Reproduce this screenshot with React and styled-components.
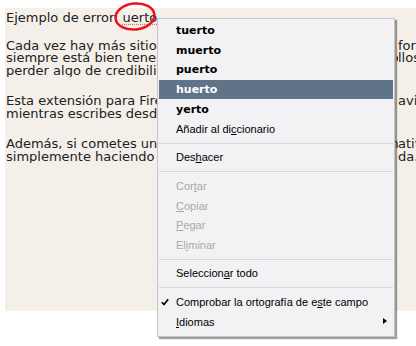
import React from "react";
import styled, { createGlobalStyle } from "styled-components";

const GlobalStyle = createGlobalStyle`
  html, body {
    margin: 0;
    padding: 0;
    background: #ffffff;
  }
`;

const Page = styled.div`
  position: relative;
  width: 416px;
  height: 346px;
  overflow: hidden;
  padding: 8px 0 0 5px;
  box-sizing: border-box;
`;

const Field = styled.div`
  height: 303px;
  background: #f4efe9;
  padding: 4px 0 0 1px;
  box-sizing: border-box;
  overflow: hidden;
  font-family: "DejaVu Sans", Verdana, sans-serif;
  font-size: 13px;
  line-height: 12.5px;
  color: #222;
`;

const Para = styled.div`
  margin-bottom: ${(p) => p.$gap}px;
`;

const Line = styled.div`
  display: grid;
  grid-template-columns: 392px max-content;
  white-space: nowrap;
`;

const Start = styled.span`
  overflow: hidden;
`;

const Misspelled = styled.span`
  text-decoration: underline dotted #e46a6a;
  text-underline-offset: 2px;
`;

const Circle = styled.svg`
  position: absolute;
  left: 108px;
  top: 0;
`;

const Menu = styled.div`
  position: absolute;
  left: 157px;
  top: 18px;
  width: 238px;
  box-sizing: border-box;
  padding: 2px 1px 5px;
  background: #f2f1f4;
  border: 1px solid #c6c4c8;
  box-shadow: 2px 2px 1px rgba(0, 0, 0, 0.38);
  font-family: "Liberation Sans", Arial, sans-serif;
  font-size: 11px;
  color: #000;
`;

const Item = styled.div`
  position: relative;
  height: 19.6px;
  display: flex;
  align-items: center;
  padding-left: 17px;
  white-space: nowrap;
  font-family: ${(p) => (p.$bold ? '"DejaVu Sans", sans-serif' : "inherit")};
  font-weight: ${(p) => (p.$bold ? 700 : 400)};
  color: ${(p) => (p.$active ? "#ffffff" : p.$disabled ? "#a9a9a9" : "#000")};
  background: ${(p) => (p.$active ? "#5f7389" : "transparent")};
`;

const Separator = styled.div`
  height: 9px;
  padding-top: 4px;
  box-sizing: border-box;

  &::after {
    content: "";
    display: block;
    height: 1px;
    background: #d6d5d8;
  }
`;

const Check = styled.svg`
  position: absolute;
  left: 2px;
  top: 6px;
`;

const Arrow = styled.span`
  position: absolute;
  right: 6px;
  top: 6px;
  border-left: 4px solid #000;
  border-top: 3.5px solid transparent;
  border-bottom: 3.5px solid transparent;
`;

const paragraphs = [
  {
    gap: 18,
    lines: [
      ["Cada vez hay más sitios web en los que puedes escribir en ", "formularios, y"],
      ["siempre está bien tener un corrector, porque los errores en e", "llos pueden"],
      ["perder algo de credibilidad.", ""],
    ],
  },
  {
    gap: 18,
    lines: [
      ["Esta extensión para Firefox comprueba tu ortografía y te ", "avisa"],
      ["mientras escribes desde cualquier formulario.", ""],
    ],
  },
  {
    gap: 0,
    lines: [
      ["Además, si cometes un error, puedes ver las palabras altern", "ativas"],
      ["simplemente haciendo clic derecho sobre la palabra marca", "da."],
    ],
  },
];

const suggestions = ["tuerto", "muerto", "puerto", "huerto", "yerto"];

export default function App() {
  return (
    <>
      <GlobalStyle />
      <Page>
        <Field>
          <Para $gap={15}>
            Ejemplo de error: <Misspelled>uerto</Misspelled>
          </Para>
          {paragraphs.map((para, i) => (
            <Para key={i} $gap={para.gap}>
              {para.lines.map(([start, end], j) => (
                <Line key={j}>
                  <Start>{start}</Start>
                  <span>{end}</span>
                </Line>
              ))}
            </Para>
          ))}
        </Field>

        <Circle width="60" height="34" viewBox="0 0 60 34">
          <ellipse
            cx="27"
            cy="16.5"
            rx="19.5"
            ry="13"
            fill="none"
            stroke="#e8141c"
            strokeWidth="2.5"
            transform="rotate(-6 27 16.5)"
          />
        </Circle>

        <Menu>
          {suggestions.map((word) => (
            <Item key={word} $bold $active={word === "huerto"}>
              {word}
            </Item>
          ))}
          <Item>
            Añadir al di<u>c</u>cionario
          </Item>
          <Separator />
          <Item>
            Des<u>h</u>acer
          </Item>
          <Separator />
          <Item $disabled>
            Cor<u>t</u>ar
          </Item>
          <Item $disabled>
            <u>C</u>opiar
          </Item>
          <Item $disabled>
            <u>P</u>egar
          </Item>
          <Item $disabled>
            El<u>i</u>minar
          </Item>
          <Separator />
          <Item>
            Seleccion<u>a</u>r todo
          </Item>
          <Separator />
          <Item>
            <Check width="8" height="8" viewBox="0 0 8 8">
              <path d="M0.8 4.2 L3 6.5 L7.2 1.2" fill="none" stroke="#000" strokeWidth="1.6" />
            </Check>
            Comprobar la ortografía de e<u>s</u>te campo
          </Item>
          <Item>
            <u>I</u>diomas
            <Arrow />
          </Item>
        </Menu>
      </Page>
    </>
  );
}
